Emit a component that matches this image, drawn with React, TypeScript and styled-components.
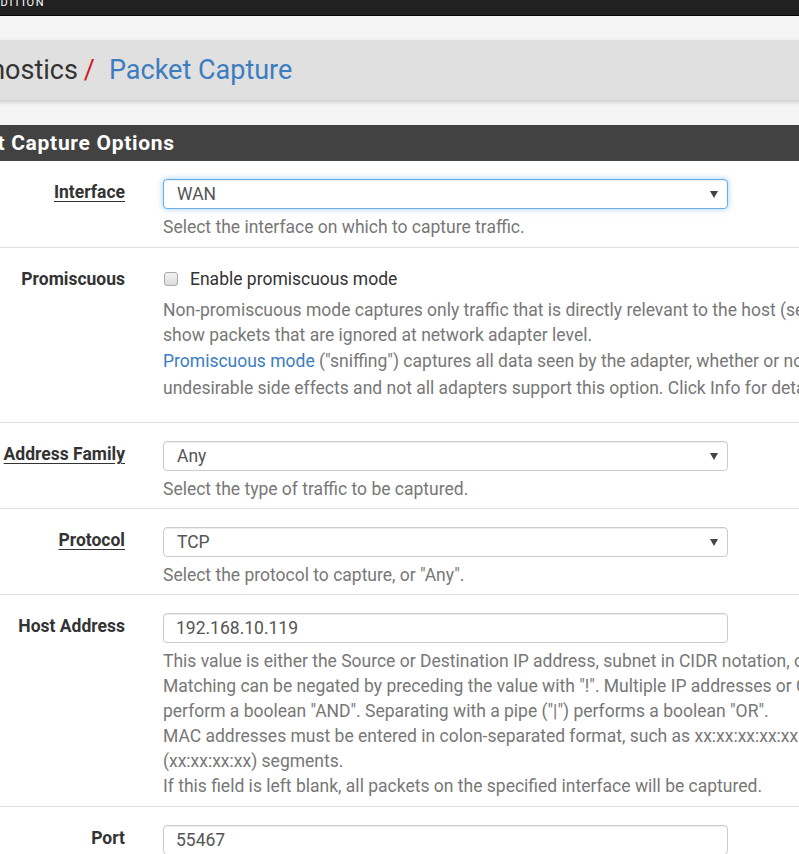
import React from "react";
import styled, { createGlobalStyle } from "styled-components";

const GlobalStyle = createGlobalStyle`
  html, body {
    margin: 0;
    padding: 0;
    overflow: hidden;
    background: #f5f5f5;
    font-family: Roboto, "Liberation Sans", Arial, sans-serif;
    color: #333;
  }
`;

const Page = styled.div`
  width: 1200px;
  margin-left: -64px;
`;

const Navbar = styled.div`
  height: 15px;
  background: #212121;
  border-bottom: 1px solid #050505;
  overflow: hidden;
`;

const Brand = styled.div`
  margin: -3px 0 0 -27px;
  font-size: 11px;
  line-height: 12px;
  letter-spacing: 1.6px;
  color: #fff;
  white-space: nowrap;
`;

const Breadcrumb = styled.div`
  margin-top: 24px;
  height: 60px;
  background: #e0e0e0;
  box-shadow: 0 2px 4px rgba(0, 0, 0, 0.18);
  display: flex;
  align-items: center;
  font-size: 27px;
  color: #333;
`;

const Slash = styled.span`
  color: #d01c1c;
  margin: 0 14px 0 6px;
`;

const CrumbLink = styled.a`
  color: #3b7dc0;
  text-decoration: none;
`;

const Panel = styled.div`
  margin-top: 25px;
  background: #fff;
`;

const PanelHeading = styled.div`
  height: 36px;
  background: #424242;
  color: #fff;
  font-size: 21px;
  font-weight: 700;
  letter-spacing: 0.7px;
  display: flex;
  align-items: center;
  white-space: nowrap;
`;

const Row = styled.div<{ $extra?: number }>`
  display: grid;
  grid-template-columns: 189px 1fr;
  column-gap: 38px;
  padding: 18px 0 ${({ $extra }) => 6 + ($extra || 0)}px;
  border-bottom: 1px solid #e0e0e0;
`;

const Label = styled.div<{ $required?: boolean }>`
  text-align: right;
  font-size: 17.5px;
  font-weight: 700;
  line-height: 25px;
  padding-top: 1px;
  color: #333;
  text-decoration: ${({ $required }) => ($required ? "underline" : "none")};
  text-underline-offset: 3px;
`;

const Field = styled.div`
  display: flex;
  flex-direction: column;
  align-items: flex-start;
`;

const SelectWrap = styled.div<{ $focused?: boolean }>`
  position: relative;
  width: 565px;
  height: 30px;
  box-sizing: border-box;
  border: 1px solid ${({ $focused }) => ($focused ? "#66afe9" : "#ccc")};
  border-radius: 4px;
  box-shadow: ${({ $focused }) =>
    $focused
      ? "inset 0 1px 1px rgba(0,0,0,.075), 0 0 6px rgba(102,175,233,.6)"
      : "inset 0 1px 1px rgba(0,0,0,.075)"};
  background: #fff;
  display: flex;
  align-items: center;
  padding-left: 13px;
  font-size: 17.5px;
  color: #555;
`;

const Caret = styled.span`
  position: absolute;
  right: 9px;
  top: 11px;
  width: 0;
  height: 0;
  border-left: 4px solid transparent;
  border-right: 4px solid transparent;
  border-top: 7px solid #444;
`;

const TextInput = styled.input`
  display: block;
  width: 565px;
  height: 30px;
  box-sizing: border-box;
  border: 1px solid #ccc;
  border-radius: 4px;
  box-shadow: inset 0 1px 1px rgba(0, 0, 0, 0.075);
  padding: 0 12px;
  font-family: inherit;
  font-size: 17.5px;
  color: #555;
  outline: none;
`;

const Help = styled.div<{ $gap?: number; $lh?: number }>`
  margin-top: ${({ $gap }) => $gap ?? 6}px;
  font-size: 17.5px;
  line-height: ${({ $lh }) => $lh ?? 25}px;
  color: #777;
`;

const Line = styled.div`
  white-space: nowrap;
`;

const HelpLink = styled.a`
  color: #3b7dc0;
  text-decoration: none;
`;

const CheckLine = styled.label`
  display: flex;
  align-items: center;
  height: 25px;
  font-size: 17.5px;
  color: #333;
`;

const Checkbox = styled.input`
  appearance: none;
  width: 14px;
  height: 14px;
  margin: 0 12px 0 1px;
  border: 1px solid #a9a9a9;
  border-radius: 3px;
  background: linear-gradient(#f2f2f2, #dcdcdc);
`;

const Select = ({ value, focused }: { value: string; focused?: boolean }) => (
  <SelectWrap $focused={focused}>
    {value}
    <Caret />
  </SelectWrap>
);

export default function App() {
  return (
    <>
      <GlobalStyle />
      <Page>
        <Navbar>
          <Brand>COMMUNITY EDITION</Brand>
        </Navbar>

        <Breadcrumb>
          Diagnostics<Slash>/</Slash>
          <CrumbLink href="#">Packet Capture</CrumbLink>
        </Breadcrumb>

        <Panel>
          <PanelHeading>Packet Capture Options</PanelHeading>

          <Row $extra={1}>
            <Label $required>Interface</Label>
            <Field>
              <Select value="WAN" focused />
              <Help>
                <Line>Select the interface on which to capture traffic.</Line>
              </Help>
            </Field>
          </Row>

          <Row $extra={15}>
            <Label>Promiscuous</Label>
            <Field>
              <CheckLine>
                <Checkbox type="checkbox" />
                Enable promiscuous mode
              </CheckLine>
              <Help $gap={7}>
                <Line>
                  Non-promiscuous mode captures only traffic that is directly relevant to the host (sent by
                  it, sent or broadcast to it, or multicast to a group it is a member of). It does not
                </Line>
                <Line>show packets that are ignored at network adapter level.</Line>
              </Help>
              <Help $gap={0} $lh={26.5}>
                <Line>
                  <HelpLink href="#">Promiscuous mode</HelpLink> ("sniffing") captures all data seen by the
                  adapter, whether or not it is valid or related to the host, but in some cases may have
                </Line>
                <Line>
                  undesirable side effects and not all adapters support this option. Click Info for details.
                </Line>
              </Help>
            </Field>
          </Row>

          <Row>
            <Label $required>Address Family</Label>
            <Field>
              <Select value="Any" />
              <Help>
                <Line>Select the type of traffic to be captured.</Line>
              </Help>
            </Field>
          </Row>

          <Row>
            <Label $required>Protocol</Label>
            <Field>
              <Select value="TCP" />
              <Help>
                <Line>Select the protocol to capture, or "Any".</Line>
              </Help>
            </Field>
          </Row>

          <Row $extra={1}>
            <Label>Host Address</Label>
            <Field>
              <TextInput defaultValue="192.168.10.119" />
              <Help>
                <Line>
                  This value is either the Source or Destination IP address, subnet in CIDR notation, or MAC
                  address.
                </Line>
                <Line>
                  Matching can be negated by preceding the value with "!". Multiple IP addresses or CIDR
                  subnets may be specified. Comma (",") separated values
                </Line>
                <Line>perform a boolean "AND". Separating with a pipe ("|") performs a boolean "OR".</Line>
                <Line>
                  MAC addresses must be entered in colon-separated format, such as xx:xx:xx:xx:xx:xx or a
                  partial address consisting of one (xx), two (xx:xx), or four
                </Line>
                <Line>(xx:xx:xx:xx) segments.</Line>
                <Line>If this field is left blank, all packets on the specified interface will be captured.</Line>
              </Help>
            </Field>
          </Row>

          <Row>
            <Label>Port</Label>
            <Field>
              <TextInput defaultValue="55467" />
              <Help>
                <Line>
                  The port can be either the source or destination port. The packet capture will look for
                  this port in either field.
                </Line>
              </Help>
            </Field>
          </Row>
        </Panel>
      </Page>
    </>
  );
}
